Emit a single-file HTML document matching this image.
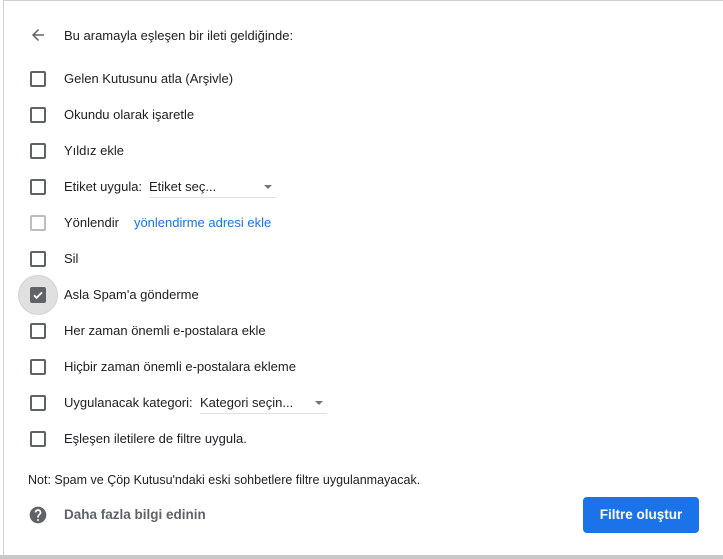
<!DOCTYPE html>
<html><head><meta charset="utf-8"><style>
*{box-sizing:border-box;margin:0;padding:0}
body{width:723px;height:559px;background:#fff;font-family:"Liberation Sans",Arial,sans-serif;font-size:13px;color:#202124;position:relative;overflow:hidden}
.panel{position:absolute;left:3px;top:0;width:730px;height:555px;border-left:1px solid #d0d0d0;border-top:1px solid #d0d0d0}
.bottom{position:absolute;left:0;top:555px;width:723px;height:4px;background:#c8c8c8}
.row{position:absolute;left:30px;height:18px;display:flex;align-items:center}
.cb{width:16px;height:16px;border:2px solid #5f6368;border-radius:2px;margin-right:18px;flex:none}
.cb.dis{border-color:#bdbdbd}
.t{line-height:18px;white-space:nowrap}
.dd{position:absolute;height:20px;border-bottom:1px solid #e0e0e0;line-height:18px}
.dd:after{content:"";position:absolute;right:4px;top:7px;border-left:4px solid transparent;border-right:4px solid transparent;border-top:4px solid #757575}
a{color:#1a73e8;text-decoration:none}
</style></head><body>
<div class="panel"></div>
<div class="bottom"></div>
<svg style="position:absolute;left:29px;top:26px" width="18" height="18" viewBox="0 0 24 24"><path d="M20 11H7.83l5.59-5.59L12 4l-8 8 8 8 1.41-1.41L7.83 13H20v-2z" fill="#5f6368"/></svg>
<div class="t" style="position:absolute;left:64px;top:27px">Bu aramayla eşleşen bir ileti geldiğinde:</div>
<div class="row" style="top:70px"><div class="cb"></div><span class="t">Gelen Kutusunu atla (Arşivle)</span></div>
<div class="row" style="top:106px"><div class="cb"></div><span class="t">Okundu olarak işaretle</span></div>
<div class="row" style="top:142px"><div class="cb"></div><span class="t">Yıldız ekle</span></div>
<div class="row" style="top:178px"><div class="cb"></div><span class="t">Etiket uygula:</span></div>
<div class="dd" style="left:149px;top:178px;width:127px">Etiket seç...</div>
<div class="row" style="top:214px"><div class="cb dis"></div><span class="t">Yönlendir</span><a class="t" style="margin-left:15px">yönlendirme adresi ekle</a></div>
<div class="row" style="top:250px"><div class="cb"></div><span class="t">Sil</span></div>
<div style="position:absolute;left:18px;top:275px;width:40px;height:40px;border-radius:50%;background:#e0e0e0;border:1px solid #d2d2d2"></div>
<div class="row" style="top:286px"><div class="cb" style="background:#5f6368;position:relative"><svg style="position:absolute;left:0;top:0" width="12" height="12" viewBox="0 0 12 12"><path d="M2 6.2l2.6 2.6L10 3.4" stroke="#fff" stroke-width="1.8" fill="none"/></svg></div><span class="t">Asla Spam'a gönderme</span></div>
<div class="row" style="top:322px"><div class="cb"></div><span class="t">Her zaman önemli e-postalara ekle</span></div>
<div class="row" style="top:358px"><div class="cb"></div><span class="t">Hiçbir zaman önemli e-postalara ekleme</span></div>
<div class="row" style="top:394px"><div class="cb"></div><span class="t">Uygulanacak kategori:</span></div>
<div class="dd" style="left:200px;top:394px;width:127px">Kategori seçin...</div>
<div class="row" style="top:430px"><div class="cb"></div><span class="t">Eşleşen iletilere de filtre uygula.</span></div>
<div class="t" style="position:absolute;left:28px;top:471px;font-size:12.5px">Not: Spam ve Çöp Kutusu'ndaki eski sohbetlere filtre uygulanmayacak.</div>
<svg style="position:absolute;left:28px;top:505px" width="20" height="20" viewBox="0 0 24 24"><path d="M12 2C6.48 2 2 6.48 2 12s4.48 10 10 10 10-4.48 10-10S17.52 2 12 2zm1 17h-2v-2h2v2zm2.07-7.75l-.9.92C13.45 12.9 13 13.5 13 15h-2v-.5c0-1.1.45-2.1 1.17-2.83l1.24-1.26c.37-.36.59-.86.59-1.41 0-1.1-.9-2-2-2s-2 .9-2 2H8c0-2.21 1.79-4 4-4s4 1.79 4 4c0 .88-.36 1.68-.93 2.25z" fill="#5f6368"/></svg>
<div class="t" style="position:absolute;left:64px;top:506px;color:#5f6368;font-weight:bold;font-size:13.5px">Daha fazla bilgi edinin</div>
<div style="position:absolute;left:583px;top:497px;width:116px;height:36px;background:#1a73e8;border-radius:4px;color:#fff;font-weight:bold;font-size:13.5px;text-align:center;line-height:36px">Filtre oluştur</div>
</body></html>
